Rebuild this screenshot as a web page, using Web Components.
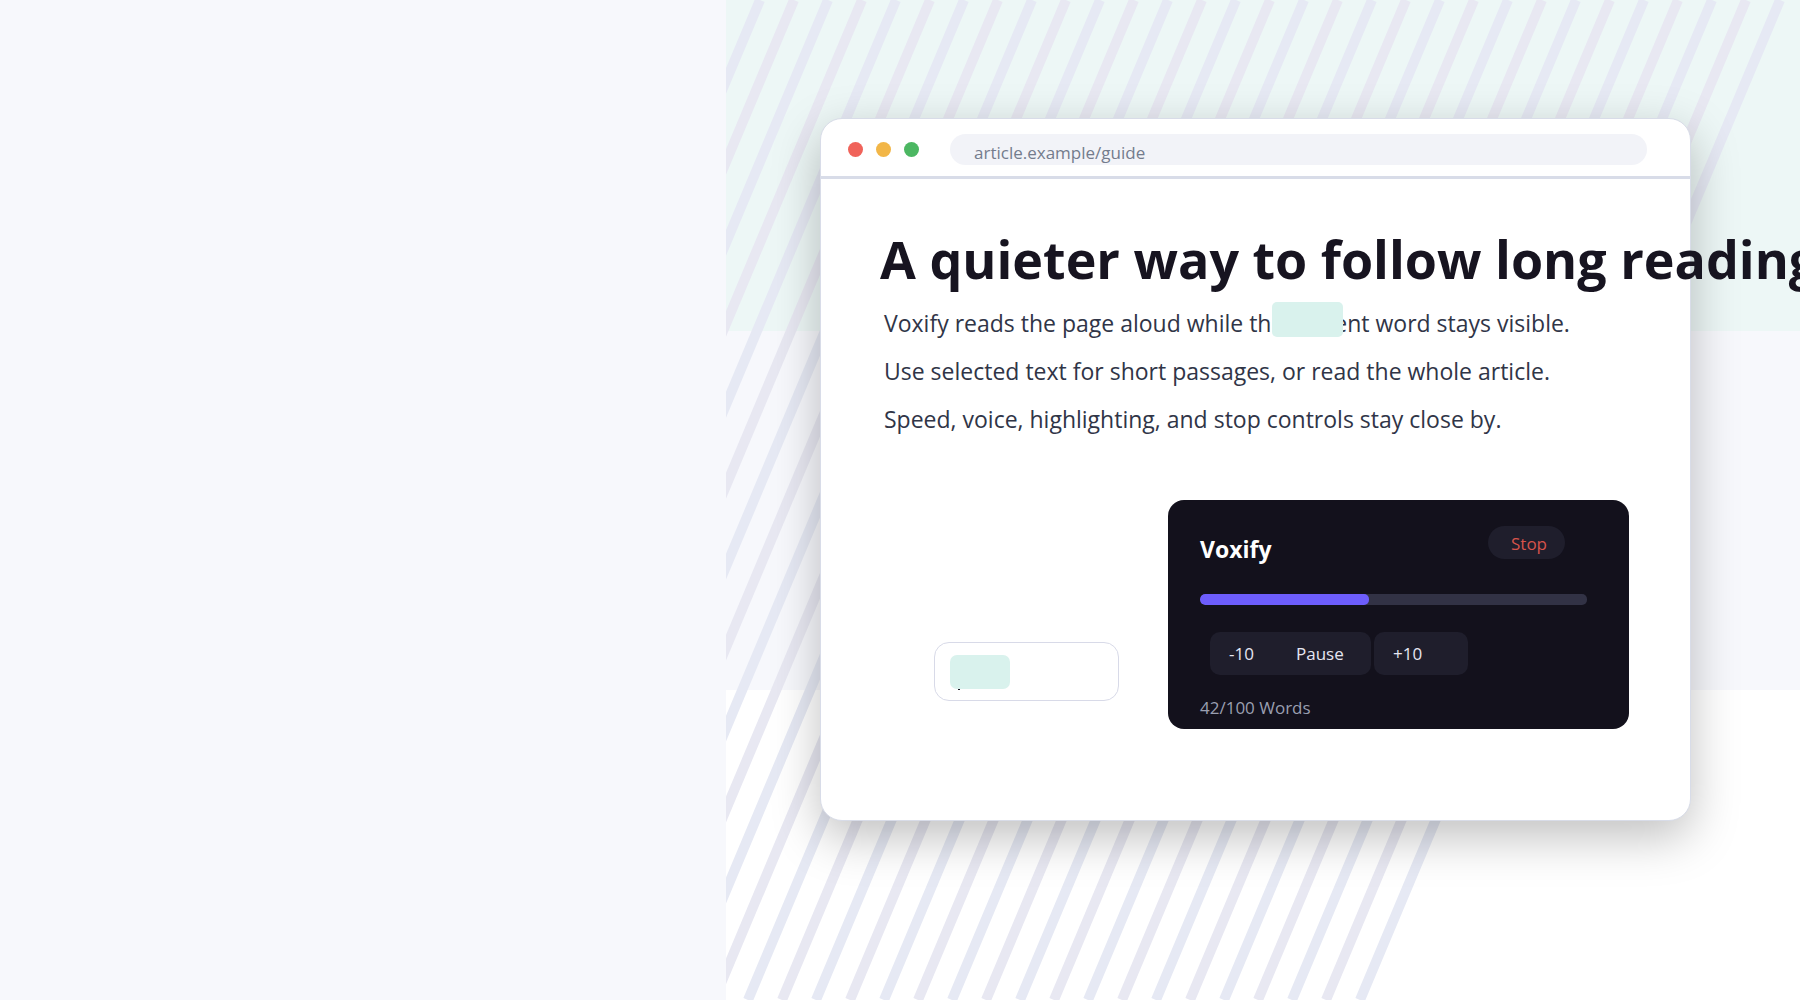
<!DOCTYPE html>
<html lang="en">
<head>
<meta charset="utf-8">
<title>Voxify</title>
<style>
  body { margin: 0; overflow: hidden; background: #f7f8fc; font-family: "Open Sans", "Noto Sans", sans-serif; }
</style>
</head>
<body>
<vox-hero>
  <browser-window address="article.example/guide">
    <article-copy>
      <span slot="title">A quieter way to follow long reading</span>
      <span>Voxify reads the page aloud while <word-mark>the current</word-mark> word stays visible.</span>
      <span>Use selected text for short passages, or read the whole article.</span>
      <span>Speed, voice, highlighting, and stop controls stay close by.</span>
    </article-copy>
    <selection-bubble slot="tools"></selection-bubble>
    <reader-panel slot="tools" read="42" total="100"></reader-panel>
  </browser-window>
</vox-hero>
<script>
function define(name, markup, setup) {
  customElements.define(name, class extends HTMLElement {
    constructor() {
      super();
      this.attachShadow({ mode: "open" }).innerHTML = markup;
    }
    connectedCallback() { if (setup) setup(this, this.shadowRoot); }
  });
}

define("stripe-field", `
  <style>
    :host { display: block; overflow: hidden; }
    svg { display: block; width: 100%; height: 100%; }
  </style>
  <svg viewBox="0 0 1074 1000" preserveAspectRatio="xMinYMin slice" aria-hidden="true" stroke-width="10"></svg>`,
  (host, root) => {
    let lines = "";
    for (let i = 0; i <= 30; i++) {
      const x = 34 + i * 34;
      lines += `<line x1="${x}" y1="0" x2="${x - 420}" y2="1000" stroke="${i % 2 ? "#e8e8f2" : "#e6e9f4"}"/>`;
    }
    root.querySelector("svg").innerHTML = lines;
  });

define("vox-hero", `
  <style>
    :host { display: grid; grid-template-columns: 726fr 1074fr; min-height: 100vh; background: #f7f8fc; }
    .stage {
      grid-column: 2; position: relative; min-width: 0; box-sizing: border-box;
      padding: 118px 109px 40px 94px;
      background: linear-gradient(#edf7f6 0 33.1%, #f7f8fc 33.1% 69%, #fff 69%);
    }
    stripe-field { position: absolute; inset: 0; }
    slot { display: block; position: relative; }
  </style>
  <div class="stage"><stripe-field></stripe-field><slot></slot></div>`);

define("browser-window", `
  <style>
    :host {
      display: block; border: 1px solid #d8dce8; border-radius: 22px; background: #fff;
      box-shadow: 0 16px 48px rgba(0, 0, 0, .25);
    }
    header { display: flex; align-items: center; box-sizing: border-box; height: 60px; padding: 4px 43px 0 27px; border-bottom: 3px solid #d8dce8; }
    .dots { display: flex; gap: 13px; margin-right: 31px; }
    i { width: 15px; height: 15px; border-radius: 50%; background: #f0635a; }
    i:nth-child(2) { background: #f2b647; }
    i:nth-child(3) { background: #4cb762; }
    input {
      flex: 1; min-width: 0; box-sizing: border-box; height: 31px; padding: 5px 24px 0;
      border: 0; border-radius: 16px; outline: 0; background: #f2f3f8; color: #747c8d; font: 17px/24px "Open Sans", sans-serif;
    }
    .tools { display: flex; justify-content: flex-end; align-items: flex-end; gap: 49px; padding: 57px 61px 91px 0; }
  </style>
  <header><span class="dots"><i></i><i></i><i></i></span><input type="text" aria-label="Address" readonly></header>
  <slot></slot>
  <div class="tools"><slot name="tools"></slot></div>`,
  (host, root) => { root.querySelector("input").value = host.getAttribute("address"); });

define("article-copy", `
  <style>
    :host { display: block; padding: 48px 0 0 59px; white-space: nowrap; }
    h1 { margin: 0 0 8px; font-size: 52px; line-height: 64px; font-weight: 700; color: #171420; }
    .lines { padding-left: 4px; font-size: 23px; line-height: 48px; color: #303547; }
    .lines ::slotted(span) { display: block; }
  </style>
  <h1><slot name="title"></slot></h1>
  <div class="lines"><slot></slot></div>`);

define("word-mark", `
  <style>
    :host { position: relative; }
    .cover { position: absolute; left: 23px; top: -5px; width: 71px; height: 35px; border-radius: 5px; background: #d9f2ed; }
  </style>
  <slot></slot><span class="cover"></span>`);

define("selection-bubble", `
  <style>
    :host {
      display: block; box-sizing: border-box; width: 185px; height: 59px; margin-bottom: 28px; padding: 12px 15px;
      border: 1px solid #d8dae8; border-radius: 15px; background: #fff;
    }
    .chip { width: 60px; height: 34px; border-radius: 7px; background: #d9f2ed; }
    .tick { width: 2px; height: 1px; margin-left: 8px; background: #171420; }
  </style>
  <div class="chip"></div><div class="tick"></div>`);

define("reader-panel", `
  <style>
    :host {
      display: block; box-sizing: border-box; width: 461px; padding: 26px 42px 9px 32px;
      border-radius: 16px; background: #13111c; color: #e6e6f2;
    }
    button { border: 0; background: #1f1e2c; color: inherit; font: 17px/24px "Open Sans", sans-serif; text-align: left; }
    .head { display: flex; justify-content: space-between; align-items: flex-start; padding-right: 22px; }
    h2 { margin: 7px 0 0; font-size: 23px; line-height: 32px; font-weight: 700; color: #fff; }
    .stop { width: 77px; height: 33px; padding: 2px 0 0 23px; border-radius: 17px; color: #d6534b; }
    .track { height: 11px; margin-top: 29px; border-radius: 5px; background: #323245; overflow: hidden; }
    .fill { width: 169px; height: 11px; border-radius: 5px; background: #6d5dfc; }
    .controls { display: flex; margin: 27px 0 0 10px; }
    .controls button { width: 94px; height: 43px; padding: 0 0 0 19px; border-radius: 10px; }
    .controls .back { width: 67px; border-radius: 10px 0 0 10px; }
    .controls .pause { border-radius: 0 10px 10px 0; margin-right: 3px; }
    .count { margin: 21px 0 0; font-size: 17px; line-height: 24px; color: #9a9fb0; }
  </style>
  <div class="head"><h2>Voxify</h2><button class="stop">Stop</button></div>
  <div class="track" role="progressbar" aria-label="Reading progress"><div class="fill"></div></div>
  <div class="controls"><button class="back">-10</button><button class="pause">Pause</button><button>+10</button></div>
  <p class="count"></p>`,
  (host, root) => {
    const read = host.getAttribute("read"), total = host.getAttribute("total");
    root.querySelector(".count").textContent = `${read}/${total} Words`;
    root.querySelector(".track").setAttribute("aria-valuenow", read);
  });
</script>
</body>
</html>
